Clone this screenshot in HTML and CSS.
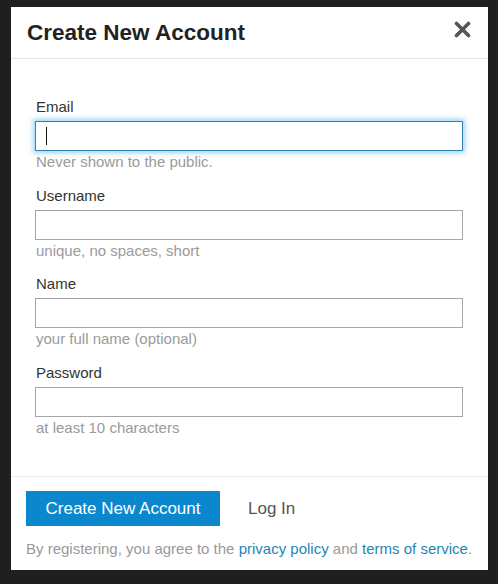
FILE: index.html
```html
<!DOCTYPE html>
<html lang="en">
<head>
<meta charset="utf-8">
<title>Create New Account</title>
<link rel="stylesheet" href="styles.css">
</head>
<body>
<div class="modal">
  <div class="modal-header">
    <h2 class="title">Create New Account</h2>
    <button class="close" aria-label="Close">
      <svg width="17" height="17" viewBox="0 0 17 17"><path d="M2.5 2.5 L14.5 14.5 M14.5 2.5 L2.5 14.5" stroke="#555" stroke-width="3.6" stroke-linecap="round"/></svg>
    </button>
  </div>
  <div class="modal-body">
    <div class="field">
      <label class="label">Email</label>
      <div class="input-wrap">
        <input class="input focused" type="text">
        <span class="caret"></span>
      </div>
      <div class="hint">Never shown to the public.</div>
    </div>
    <div class="field">
      <label class="label">Username</label>
      <div class="input-wrap"><input class="input" type="text"></div>
      <div class="hint">unique, no spaces, short</div>
    </div>
    <div class="field">
      <label class="label">Name</label>
      <div class="input-wrap"><input class="input" type="text"></div>
      <div class="hint">your full name (optional)</div>
    </div>
    <div class="field">
      <label class="label">Password</label>
      <div class="input-wrap"><input class="input" type="password"></div>
      <div class="hint">at least 10 characters</div>
    </div>
  </div>
  <div class="modal-footer">
    <div class="actions">
      <button class="btn-primary">Create New Account</button>
      <a class="login" href="#">Log In</a>
    </div>
    <p class="terms">By registering, you agree to the <a href="#">privacy policy</a> and <a href="#">terms of service</a>.</p>
  </div>
</div>
</body>
</html>
```
FILE: styles.css
```css
html, body {
  margin: 0;
  padding: 0;
  background: #1f1f1f;
  font-family: "Liberation Sans", Arial, sans-serif;
}
body {
  padding: 7px 0 0 11px;
  height: 584px;
  box-sizing: border-box;
  overflow: hidden;
}
.modal {
  width: 477px;
  height: 563px;
  background: #fff;
  display: flex;
  flex-direction: column;
}
.modal-header {
  height: 51px;
  border-bottom: 1px solid #e6e6e6;
  display: flex;
  align-items: center;
  justify-content: space-between;
  padding: 0 17px 0 16px;
}
.title {
  margin: 0;
  font-size: 22.5px;
  font-weight: bold;
  color: #222;
}
.close {
  border: 0;
  background: none;
  padding: 0;
  width: 17px;
  height: 17px;
  display: block;
  margin-top: -6px;
}
.close svg { display: block; }
.modal-body {
  padding: 39px 25px 38px 24px;
  display: flex;
  flex-direction: column;
  gap: 16.7px;
  flex: 1;
}
.field {
  display: flex;
  flex-direction: column;
}
.label {
  font-size: 15px;
  line-height: 17px;
  color: #333;
  padding-left: 1px;
  margin-bottom: 6px;
}
.input-wrap {
  position: relative;
}
.input {
  display: block;
  width: 428px;
  height: 30px;
  box-sizing: border-box;
  border: 1px solid #a6a6a6;
  border-radius: 0;
  padding: 0 10px;
  margin: 0;
  font: 15px "Liberation Sans", Arial, sans-serif;
  background: #fff;
  outline: none;
}
.input.focused {
  border: 1.5px solid #2f82b8;
  box-shadow: 0 0 5px 2px rgba(120, 200, 245, 0.75);
}
.caret {
  position: absolute;
  left: 11px;
  top: 6px;
  width: 1px;
  height: 18px;
  background: #111;
}
.hint {
  font-size: 15px;
  line-height: 17px;
  color: #9a9a9a;
  margin-top: 2px;
  padding-left: 1px;
}
.modal-footer {
  border-top: 1px solid #e9e9e9;
  padding: 14px 15px 13px 15px;
}
.actions {
  display: flex;
  align-items: center;
  gap: 28px;
}
.btn-primary {
  height: 35px;
  width: 194px;
  padding: 0;
  border: 0;
  border-radius: 0;
  background: #0b87cd;
  color: #fff;
  font: 17px "Liberation Sans", Arial, sans-serif;
}
.login {
  color: #555;
  font-size: 17px;
  text-decoration: none;
}
.terms {
  margin: 14px 0 0 0;
  font-size: 15px;
  line-height: 17px;
  color: #999;
  white-space: nowrap;
}
.terms a {
  color: #2785b6;
  text-decoration: none;
}
```
